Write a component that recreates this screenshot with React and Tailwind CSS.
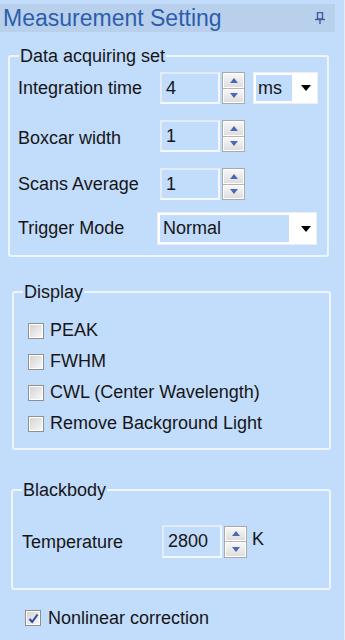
import React from 'react';

function Spin() {
  return (
    <div className="flex h-[32px] w-[23px] flex-col gap-px border border-[#a9a9a9] bg-[#b4b4b4]">
      <div className="flex flex-1 items-center justify-center border border-white bg-gradient-to-b from-[#f6f6f6] to-[#dedede]">
        <svg width="8" height="5" viewBox="0 0 8 5">
          <path d="M0 5 L4 0 L8 5 Z" fill="#4c67b6" />
        </svg>
      </div>
      <div className="flex flex-1 items-center justify-center border border-white bg-gradient-to-b from-[#f6f6f6] to-[#dedede]">
        <svg width="8" height="5" viewBox="0 0 8 5">
          <path d="M0 0 L8 0 L4 5 Z" fill="#4c67b6" />
        </svg>
      </div>
    </div>
  );
}

function NumBox({ value, h = 'h-[32px]' }) {
  return (
    <div className={`flex ${h} w-[60px] items-center border-2 border-t-[#e2ebf6] border-l-[#e2ebf6] border-r-[#f4f8fe] border-b-[#f4f8fe] pl-[4px] text-[18px]`}>
      {value}
    </div>
  );
}

function Caret() {
  return (
    <svg width="10" height="6" viewBox="0 0 10 6">
      <path d="M0 0 L10 0 L5 6 Z" fill="#000" />
    </svg>
  );
}

function Check({ checked }) {
  return (
    <div className="h-[16px] w-[16px] border border-[#8e8f8f] bg-white p-px">
      <div className="flex h-full w-full items-center justify-center bg-gradient-to-br from-[#d4d4d4] to-[#f8f8f8]">
        {checked && (
          <svg width="11" height="11" viewBox="0 0 11 11">
            <path d="M1.5 6 L4.2 9 L9.5 1.5" fill="none" stroke="#2c46a6" strokeWidth="2" />
          </svg>
        )}
      </div>
    </div>
  );
}

function Group({ title, className, children }) {
  return (
    <fieldset className={`rounded-[3px] border-2 border-[#eef5ff] ${className}`}>
      <legend className="ml-[9px] px-[1px] text-[18px] leading-[20px]">{title}</legend>
      {children}
    </fieldset>
  );
}

export default function App() {
  const opts = ['PEAK', 'FWHM', 'CWL (Center Wavelength)', 'Remove Background Light'];
  return (
    <div
      className="h-[640px] w-[345px] overflow-hidden border-r border-[#e4edf7] bg-[#c2dcfc] text-[#161616]"
      style={{ fontFamily: '"Liberation Sans", Arial, sans-serif' }}
    >
      <div className="mt-[4px] flex h-[28px] w-[335px] items-center justify-between bg-[#b8d0ec] pl-[3px] pr-[10px]">
        <span className="text-[23px] leading-[28px] text-[#2c5eac]">Measurement Setting</span>
        <svg width="10" height="12" viewBox="0 0 10 12">
          <path d="M2.5 0.5 H7.5 V7 H2.5 Z" fill="none" stroke="#3d5c9c" strokeWidth="1.4" />
          <path d="M0 7.5 H10" stroke="#3d5c9c" strokeWidth="1.4" />
          <path d="M5 8 V12" stroke="#3d5c9c" strokeWidth="1.4" />
        </svg>
      </div>

      <Group title="Data acquiring set" className="ml-[8px] mt-[14px] w-[321px]">
        <div className="flex flex-col pb-[10px] pl-[8px] pt-[6px] text-[18px]">
          <div className="flex h-[32px] items-center">
            <span className="w-[142px]">Integration time</span>
            <NumBox value="4" />
            <div className="ml-[2px]"><Spin /></div>
            <div className="ml-[8px] flex h-[32px] w-[65px] items-center border border-[#eeeeee] bg-white pl-[2px]">
              <div className="flex h-[26px] w-[36px] items-center bg-[#c2dcfc] pl-[2px]">ms</div>
              <div className="ml-[9px]"><Caret /></div>
            </div>
          </div>
          <div className="mt-[16px] flex h-[32px] items-center">
            <span className="w-[142px] pt-[4px]">Boxcar width</span>
            <NumBox value="1" />
            <div className="ml-[2px]"><Spin /></div>
          </div>
          <div className="mt-[16px] flex h-[32px] items-center">
            <span className="w-[142px]">Scans Average</span>
            <NumBox value="1" />
            <div className="ml-[2px]"><Spin /></div>
          </div>
          <div className="mt-[12px] flex h-[33px] items-center">
            <span className="w-[139px]">Trigger Mode</span>
            <div className="flex h-[33px] w-[160px] items-center border border-[#eeeeee] bg-white pl-[2px]">
              <div className="flex h-[27px] w-[129px] items-center bg-[#c2dcfc] pl-[3px]">Normal</div>
              <div className="ml-[12px]"><Caret /></div>
            </div>
          </div>
        </div>
      </Group>

      <Group title="Display" className="ml-[12px] mt-[25px] w-[319px]">
        <div className="flex flex-col pb-[9px] pl-[14px] pt-[13px] text-[18px]">
          {opts.map((o) => (
            <div key={o} className="flex h-[31px] items-center gap-[6px]">
              <Check />
              <span>{o}</span>
            </div>
          ))}
        </div>
      </Group>

      <Group title="Blackbody" className="ml-[11px] mt-[30px] w-[320px]">
        <div className="flex items-center pb-[30px] pl-[9px] pt-[25px] text-[18px]">
          <span className="w-[140px] pt-[2px]">Temperature</span>
          <NumBox value="2800" h="h-[33px]" />
          <div className="ml-[2px]"><Spin /></div>
          <span className="ml-[5px] pb-[4px]">K</span>
        </div>
      </Group>

      <div className="ml-[25px] mt-[18px] flex h-[20px] items-center gap-[7px] text-[18px]">
        <Check checked />
        <span>Nonlinear correction</span>
      </div>
    </div>
  );
}
